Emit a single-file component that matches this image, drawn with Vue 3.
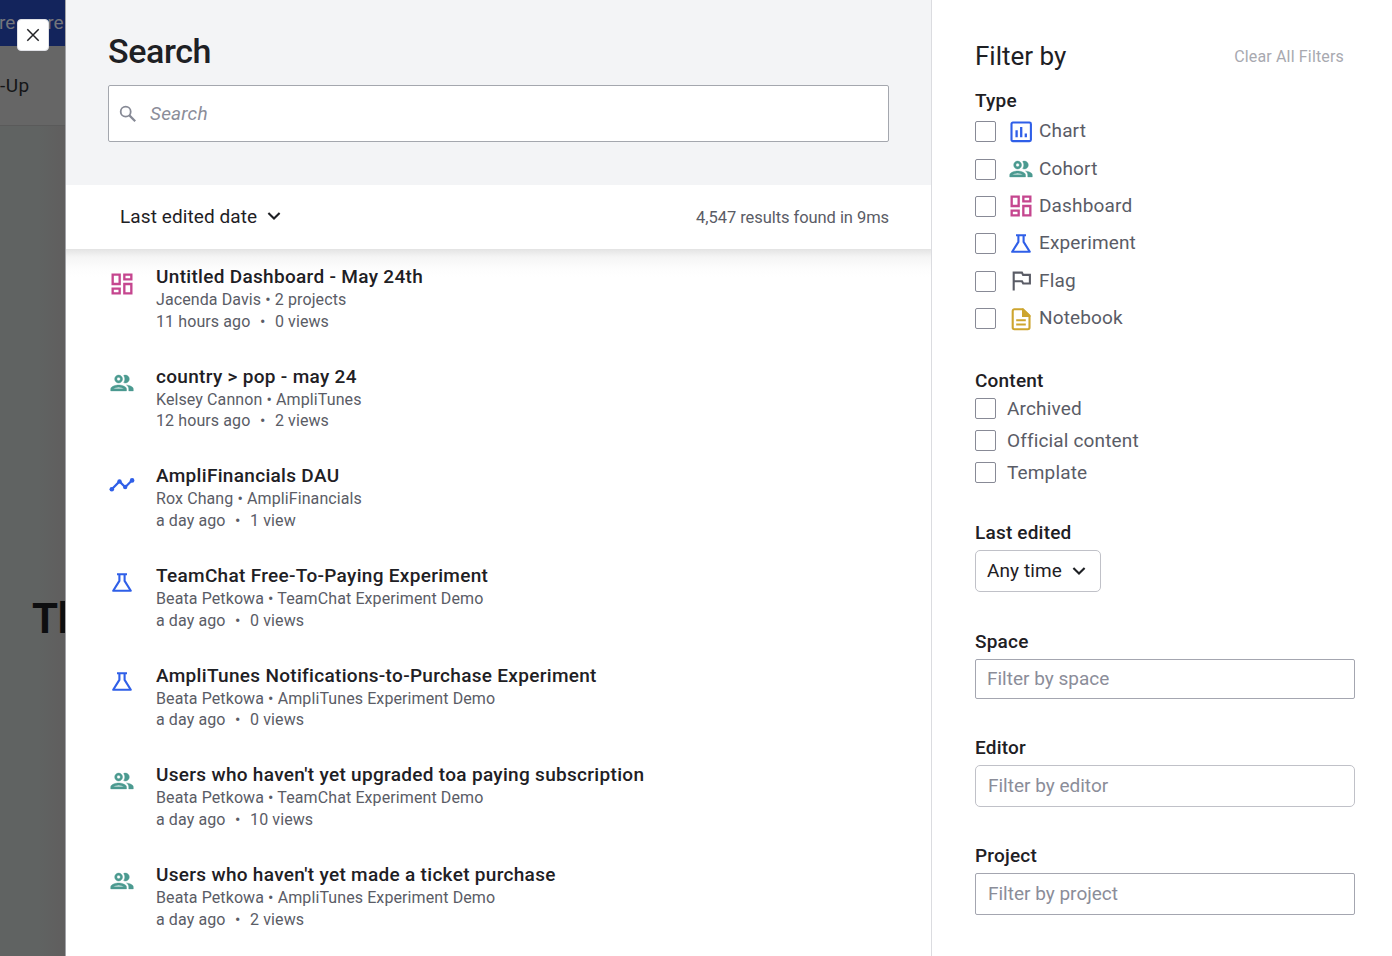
<script setup>
import { ref } from 'vue'

const query = ref('')
const results = [
  { icon: 'dashboard', title: 'Untitled Dashboard - May 24th', owner: 'Jacenda Davis • 2 projects', age: '11 hours ago', views: '0 views' },
  { icon: 'cohort', title: 'country > pop - may 24', owner: 'Kelsey Cannon • AmpliTunes', age: '12 hours ago', views: '2 views' },
  { icon: 'trend', title: 'AmpliFinancials DAU', owner: 'Rox Chang • AmpliFinancials', age: 'a day ago', views: '1 view' },
  { icon: 'experiment', title: 'TeamChat Free-To-Paying Experiment', owner: 'Beata Petkowa • TeamChat Experiment Demo', age: 'a day ago', views: '0 views' },
  { icon: 'experiment', title: 'AmpliTunes Notifications-to-Purchase Experiment', owner: 'Beata Petkowa • AmpliTunes Experiment Demo', age: 'a day ago', views: '0 views' },
  { icon: 'cohort', title: "Users who haven't yet upgraded toa paying subscription", owner: 'Beata Petkowa • TeamChat Experiment Demo', age: 'a day ago', views: '10 views' },
  { icon: 'cohort', title: "Users who haven't yet made a ticket purchase", owner: 'Beata Petkowa • AmpliTunes Experiment Demo', age: 'a day ago', views: '2 views' },
]
const types = [
  { icon: 'chart', label: 'Chart' },
  { icon: 'cohort', label: 'Cohort' },
  { icon: 'dashboard', label: 'Dashboard' },
  { icon: 'experiment', label: 'Experiment' },
  { icon: 'flag', label: 'Flag' },
  { icon: 'notebook', label: 'Notebook' },
]
const contents = ['Archived', 'Official content', 'Template']
</script>

<template>
  <svg class="sprite" aria-hidden="true">
    <symbol id="dashboard" viewBox="0 0 24 24"><path fill="currentColor" d="M19 5v2h-4V5h4M9 5v6H5V5h4m10 8v6h-4v-6h4M9 17v2H5v-2h4M21 3h-8v6h8V3zM11 3H3v10h8V3zm10 8h-8v10h8V11zm-10 4H3v6h8v-6z" /></symbol>
    <symbol id="cohort" viewBox="-.4 -.4 24.8 24.8"><path fill="currentColor" stroke="currentColor" stroke-width=".35" d="M9 13.75c-2.34 0-7 1.17-7 3.5V19h14v-1.75c0-2.33-4.66-3.5-7-3.5zM4.34 17c.84-.58 2.87-1.25 4.66-1.25s3.82.67 4.66 1.25H4.34zM9 12c1.93 0 3.5-1.57 3.5-3.5S10.93 5 9 5 5.5 6.57 5.5 8.5 7.07 12 9 12zm0-5c.83 0 1.5.67 1.5 1.5S9.83 10 9 10s-1.5-.67-1.5-1.5S8.17 7 9 7zm7.04 6.81c1.16.84 1.96 1.96 1.96 3.44V19h4v-1.75c0-2.02-3.5-3.17-5.96-3.44zM15 12c1.93 0 3.5-1.57 3.5-3.5S16.93 5 15 5c-.54 0-1.04.13-1.5.35.63.89 1 1.98 1 3.15s-.37 2.26-1 3.15c.46.22.96.35 1.5.35z" /></symbol>
    <symbol id="trend" viewBox="0 0 28 28">
      <path d="M3.8 20.2 11.5 12.4 17.2 18.2 24.1 11.2" fill="none" stroke="currentColor" stroke-width="2.2" />
      <g fill="currentColor"><circle cx="3.8" cy="20.2" r="2.3" /><circle cx="11.5" cy="12.4" r="2.2" /><circle cx="17.2" cy="18" r="2.2" /><circle cx="24.1" cy="11.4" r="2.3" /></g>
    </symbol>
    <symbol id="experiment" viewBox="0 0 28 28"><path d="M9 5.3h10M11.4 5.3v6.6L5.2 21.8h17.6L16.6 11.9V5.3" fill="none" stroke="currentColor" stroke-width="2.1" stroke-linejoin="round" /></symbol>
    <symbol id="chart" viewBox="0 0 28 28"><rect x="4.5" y="4.5" width="19.4" height="18.6" rx="1.4" fill="none" stroke="currentColor" stroke-width="2.1" /><path d="M9.6 12.2v7M14.2 9v10.2M18.8 15.4v3.8" stroke="currentColor" stroke-width="2.3" /></symbol>
    <symbol id="flag" viewBox="0 0 28 28"><path d="M6.7 23.5V5.6h8.2l1.2 2.3h6.8v8.6h-6.7l-1.2-2.2H6.7" fill="none" stroke="currentColor" stroke-width="2.1" /></symbol>
    <symbol id="notebook" viewBox="0 0 28 28"><path d="M15.8 4.2H7.4a1.7 1.7 0 0 0-1.7 1.7v16.6a1.7 1.7 0 0 0 1.7 1.7h13.4a1.7 1.7 0 0 0 1.7-1.7V10.6z" fill="none" stroke="currentColor" stroke-width="2.1" /><path d="M15 3.4h1.3l7.1 7V12H15z" fill="currentColor" /><path d="M9.2 15.2h9.6M9.2 19.4h9.6" stroke="currentColor" stroke-width="2" /></symbol>
    <symbol id="chevron" viewBox="0 0 14 14"><path d="m1.4 4 5.6 5.6L12.6 4" fill="none" stroke="currentColor" stroke-width="2.1" /></symbol>
  </svg>

  <div class="screen">
    <div class="backdrop">
      <div class="banner"><span>re</span><span>re</span></div>
      <div class="topbar">-Up</div>
      <div class="hero">Th</div>
      <button class="close" aria-label="Close">
        <svg width="14" height="14" viewBox="0 0 14 14"><path d="m1.3 1.3 11.4 11.4M12.7 1.3 1.3 12.7" stroke="#222326" stroke-width="1.5" /></svg>
      </button>
    </div>

    <main class="main">
      <header class="head">
        <h1>Search</h1>
        <label class="search">
          <svg width="18" height="18" viewBox="0 0 18 18" fill="none" stroke="#868995" stroke-width="1.8"><circle cx="6.7" cy="6.7" r="5" /><path d="m10.4 10.4 5.8 5.8" stroke-width="2.2" /></svg>
          <input v-model="query" placeholder="Search" />
        </label>
      </header>
      <div class="sortbar">
        <button class="sort"><span>Last edited date</span><svg width="14" height="14"><use href="#chevron" /></svg></button>
        <span class="count">4,547 results found in 9ms</span>
      </div>
      <ul class="results">
        <li v-for="r in results" :key="r.title" class="result">
          <svg :class="['icon', r.icon]"><use :href="'#' + r.icon" /></svg>
          <div>
            <h2>{{ r.title }}</h2>
            <p>{{ r.owner }}</p>
            <p class="stats"><span>{{ r.age }}</span><span>•</span><span>{{ r.views }}</span></p>
          </div>
        </li>
      </ul>
    </main>

    <aside class="filters">
      <div class="filters-head"><span class="filters-title">Filter by</span><span class="clear">Clear All Filters</span></div>
      <section class="group">
        <h3>Type</h3>
        <label v-for="t in types" :key="t.label" class="option typed">
          <input type="checkbox" />
          <svg :class="['icon', t.icon]"><use :href="'#' + t.icon" /></svg>
          <span>{{ t.label }}</span>
        </label>
      </section>
      <section class="group content">
        <h3>Content</h3>
        <label v-for="c in contents" :key="c" class="option"><input type="checkbox" /><span>{{ c }}</span></label>
      </section>
      <section class="group field edited">
        <h3>Last edited</h3>
        <button class="time"><span>Any time</span><svg width="14" height="14"><use href="#chevron" /></svg></button>
      </section>
      <section class="group field space"><h3>Space</h3><input class="text" placeholder="Filter by space" /></section>
      <section class="group field editor"><h3>Editor</h3><input class="text" placeholder="Filter by editor" /></section>
      <section class="group field project"><h3>Project</h3><input class="text" placeholder="Filter by project" /></section>
    </aside>
  </div>
</template>

<style>
body { margin: 0; overflow: hidden; }
</style>

<style scoped>
.sprite { position: absolute; width: 0; height: 0; }
.screen { display: flex; width: 1392px; height: 956px; overflow: hidden; background: #fff; color: #1e2024; font-family: Roboto, "Liberation Sans", sans-serif; font-size: 19px; }
h1, h2, h3, p, ul { margin: 0; padding: 0; list-style: none; }
button, input { font: inherit; color: inherit; letter-spacing: inherit; background: #fff; box-sizing: border-box; }

.backdrop { position: relative; flex: 0 0 65px; height: 956px; overflow: hidden; background: linear-gradient(90deg, #606362, #606362 60%, #605e5e); white-space: nowrap; }
.banner { display: flex; gap: 32px; align-items: center; height: 46px; margin-left: -1px; padding-bottom: 1px; box-sizing: border-box; background: #13245c; color: #74757b; }
.topbar { height: 79px; line-height: 79px; background: #666; border-bottom: 1px solid #5a5a5a; color: #151618; letter-spacing: .5px; }
.hero { padding: 466px 0 0 32px; font-size: 42px; font-weight: 700; line-height: 54px; color: #0d0e10; }
.close { position: absolute; left: 17px; top: 19px; display: flex; align-items: center; justify-content: center; width: 32px; height: 32px; padding: 0 1px 0 0; border: 1px solid #e0e1e6; border-radius: 4px; }

.main { flex: 0 0 867px; box-sizing: border-box; border-left: 1px solid #a3a4a8; border-right: 1px solid #dbdce0; }
.head { height: 185px; padding: 31px 42px 0; box-sizing: border-box; background: #f3f4f6; }
h1 { height: 54px; line-height: 41px; font-size: 34px; font-weight: 500; letter-spacing: -.4px; }
.search { display: flex; align-items: center; gap: 13px; height: 57px; padding: 0 10px; box-sizing: border-box; background: #fff; border: 1px solid #a4a7ae; border-radius: 2px; }
.search input { flex: 1; padding: 0; border: 0; outline: 0; font-style: italic; letter-spacing: .2px; }
input::placeholder { color: #8b8d99; opacity: 1; }
.sortbar { display: flex; align-items: center; justify-content: space-between; height: 64px; padding: 0 42px 0 54px; }
.sort { display: flex; align-items: center; gap: 10px; padding: 0 0 2px; border: 0; letter-spacing: .09px; }
.count { font-size: 16.5px; letter-spacing: -.06px; color: #5a5c66; }
.results { padding: 16px 42px 0; background: linear-gradient(#e3e3e3, #f5f5f5 8px, #fdfdfd 20px, #fff 28px); }
.result { display: flex; gap: 20.5px; height: 99.7px; }
.icon { width: 28px; height: 28px; flex: none; }
.result .icon { margin: 4.5px 0 0 -.5px; }
.result .icon.cohort { margin-top: 4px; }
.dashboard { color: #c5468f; }
.cohort { color: #4b9a90; }
.trend, .experiment, .chart { color: #2f5fe8; }
.flag { color: #5a5c66; }
.notebook { color: #cda52f; }
h2 { font-size: 19px; font-weight: 500; line-height: 24px; letter-spacing: .31px; }
p { font-size: 16px; line-height: 21.7px; letter-spacing: .1px; color: #5a5c66; }
.stats { display: flex; gap: 9.5px; }

.filters { flex: 1; padding: 40px 37px 0 43px; }
.filters-head { display: flex; align-items: center; justify-content: space-between; height: 32px; padding-right: 11px; margin-bottom: 17px; }
.filters-title { font-size: 26px; }
.clear { font-size: 16px; letter-spacing: .16px; color: #a8a9b0; }
h3 { height: 24px; line-height: 24px; font-size: 19px; font-weight: 500; letter-spacing: .2px; }
.option { display: flex; align-items: center; height: 32px; color: #5a5c66; letter-spacing: .15px; }
.option span { line-height: 24px; }
.option input { appearance: none; width: 21px; height: 21px; flex: none; margin: 0 11px 0 0; border: 1px solid #888a96; border-radius: 2px; }
.option.typed { height: 37.4px; }
.typed span { padding-bottom: 1px; }
.typed input { margin-right: 10.5px; }
.typed .icon { margin-right: 4.5px; }
.content { margin-top: 31.6px; }
.edited { margin-top: 32px; }
.space { margin-top: 38px; }
.editor, .project { margin-top: 37px; }
.field h3 { margin-bottom: 5px; }
.time { display: flex; align-items: center; justify-content: space-between; width: 126px; height: 42px; padding: 0 14px 0 11px; border: 1px solid #c0c1c8; border-radius: 5px; letter-spacing: .1px; }
.text { display: block; width: 380px; height: 42px; padding: 0 12px; border: 1px solid #a4a6b0; border-radius: 2px; }
.space .text { height: 40px; padding: 0 11px; }
.editor .text { border-color: #c0c1c8; border-radius: 5px; }
</style>
